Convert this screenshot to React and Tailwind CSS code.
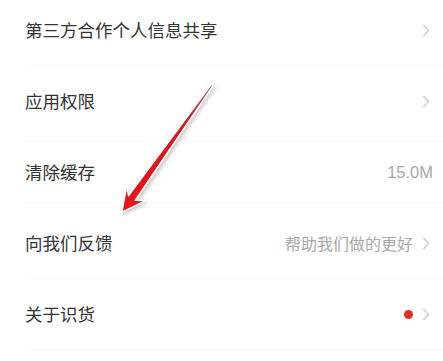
import React from 'react';

const Chevron = () => (
    <svg width="8" height="13" viewBox="0 0 8 13" className="shrink-0">
        <polyline points="1.5,1 6.5,6.5 1.5,12" fill="none" stroke="#c9c9c9" strokeWidth="1.2" />
    </svg>
);

const rows = [
    { label: '第三方合作个人信息共享', chevron: true },
    { label: '应用权限', chevron: true },
    { label: '清除缓存', value: '15.0M' },
    { label: '向我们反馈', value: '帮助我们做的更好', chevron: true },
    { label: '关于识货', dot: true, chevron: true },
];

const Arrow = () => (
    <svg className="absolute inset-0 pointer-events-none" width="443" height="361" viewBox="0 0 443 361">
        <defs>
            <linearGradient id="shaft" x1="212" y1="85" x2="122" y2="212" gradientUnits="userSpaceOnUse">
                <stop offset="0" stopColor="#8a6a6a" />
                <stop offset="0.25" stopColor="#c3232a" />
                <stop offset="1" stopColor="#e8121a" />
            </linearGradient>
            <filter id="sh" x="-30%" y="-30%" width="160%" height="160%">
                <feDropShadow dx="1.5" dy="2" stdDeviation="2" floodColor="#000" floodOpacity="0.25" />
            </filter>
        </defs>
        <path
            d="M122,212 L126.5,187 L128.5,195.8 L211.4,84.4 L213,85.6 L135.1,200.4 L145.5,200.5 Z"
            fill="url(#shaft)"
            stroke="#fff"
            strokeWidth="1.3"
            strokeLinejoin="round"
            filter="url(#sh)"
        />
    </svg>
);

export default function App() {
    return (
        <div className="relative w-[443px] h-[361px] bg-white overflow-hidden" style={{ fontFamily: '"Noto Sans CJK SC", "Noto Sans", sans-serif' }}>
            <div className="-mt-[5px] flex flex-col">
                {rows.map((r, i) => (
                    <div key={i} className={`ml-[25px] h-[71px] flex items-center justify-between border-b border-[#fafafa] ${r.chevron ? 'pr-[13px]' : 'pr-[10px]'}`}>
                        <span className="text-[17.5px] text-[#333333]">{r.label}</span>
                        <div className="flex items-center gap-[9px]">
                            {r.value && (
                                <span className={`text-[#a8a8a8] ${r.value === '15.0M' ? 'text-[16.5px]' : 'text-[16px]'}`} style={r.value === '15.0M' ? { fontFamily: '"Liberation Sans", sans-serif' } : undefined}>
                                    {r.value}
                                </span>
                            )}
                            {r.dot && <span className="w-[9px] h-[9px] rounded-full bg-[#d8302c]" />}
                            {r.chevron && <Chevron />}
                        </div>
                    </div>
                ))}
            </div>
            <Arrow />
        </div>
    );
}
